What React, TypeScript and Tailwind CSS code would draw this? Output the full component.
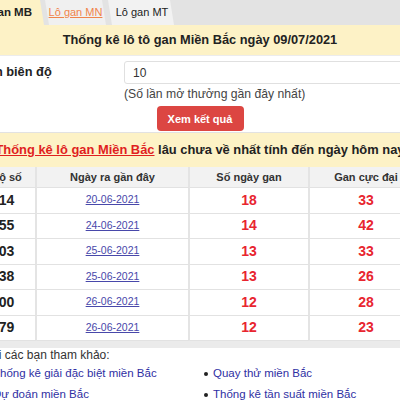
import React from "react";

const rows = [
  { so: "14", date: "20-06-2021", gan: "18", max: "33" },
  { so: "55", date: "24-06-2021", gan: "14", max: "42" },
  { so: "03", date: "25-06-2021", gan: "13", max: "33" },
  { so: "38", date: "25-06-2021", gan: "13", max: "26" },
  { so: "00", date: "26-06-2021", gan: "12", max: "28" },
  { so: "79", date: "26-06-2021", gan: "12", max: "23" },
];

export default function App() {
  return (
    <div className="w-[400px] h-[400px] overflow-hidden bg-white font-['Liberation_Sans',Arial,sans-serif] text-[#222]">
      <div className="w-[444px] -ml-[22px]">
        {/* Tabs */}
        <div className="flex h-[25px] bg-[#e3e3e3]">
          <div className="w-[66px] bg-[#fdf2c6] flex items-center justify-end pr-[12px] overflow-hidden whitespace-nowrap [clip-path:polygon(0_0,calc(100%_-_4px)_0,100%_100%,0_100%)]">
            <span className="text-[11.5px] font-bold text-[#222]">Lô gan MB</span>
          </div>
          <div className="w-[61px] ml-[1px] bg-[#f0f0f0] flex items-center justify-center whitespace-nowrap [clip-path:polygon(0_0,calc(100%_-_4px)_0,100%_100%,4px_100%)]">
            <span className="text-[11px] text-[#f0844c] underline">Lô gan MN</span>
          </div>
          <div className="w-[66px] ml-[2px] bg-[#f2f2f2] flex items-center justify-center whitespace-nowrap [clip-path:polygon(0_0,calc(100%_-_4px)_0,100%_100%,4px_100%)]">
            <span className="text-[11px] text-[#222] pl-[2px]">Lô gan MT</span>
          </div>
        </div>

        {/* Title panel */}
        <div className="h-[31px] bg-[#fdf2c6] flex items-center justify-center border-b border-[#ececec]">
          <h1 className="text-[12.8px] font-bold text-[#222] whitespace-nowrap">
            Thống kê lô tô gan Miền Bắc ngày 09/07/2021
          </h1>
        </div>

        {/* Form */}
        <div className="h-[77px] border-b border-[#e2e2e2] flex flex-col">
          <div className="flex pt-[5px]">
            <div className="w-[146px] shrink-0 pt-[1px]">
              <span className="block -ml-[8px] text-[12.8px] font-bold text-[#222] whitespace-nowrap">Chọn biên độ</span>
            </div>
            <div className="flex flex-col">
              <div className="w-[300px] h-[23px] border border-[#e0e0e0] rounded-[3px] flex items-center pl-[8px] text-[12px] text-[#333]">
                10
              </div>
              <div className="text-[12.2px] text-[#444] mt-[1px] whitespace-nowrap">(Số lần mở thưởng gần đây nhất)</div>
            </div>
          </div>
          <div className="flex justify-center mt-[3px]">
            <button className="w-[87px] h-[25px] rounded-[4px] bg-[#dc4642] text-white text-[11px] font-bold">
              Xem kết quả
            </button>
          </div>
        </div>

        {/* Strip */}
        <div className="h-[34px] bg-[#fdf2c6] flex items-center justify-center whitespace-nowrap">
          <span className="text-[12.9px] font-bold">
            <span className="text-[#e01f1f] underline">Thống kê lô gan Miền Bắc</span>
            <span className="text-[#222]"> lâu chưa về nhất tính đến ngày hôm nay</span>
          </span>
        </div>

        {/* Table */}
        <div className="grid grid-cols-[59px_153px_120px_112px]">
          {["Bộ số", "Ngày ra gần đây", "Số ngày gan", "Gan cực đại"].map((h, i) => (
            <div
              key={h}
              className={`h-[21px] bg-[#f2f2f2] flex items-center justify-center text-[11px] font-bold text-[#333] whitespace-nowrap border-b border-[#e2e2e2] ${i < 3 ? "border-r-2 border-r-[#e4e4e4]" : ""}`}
            >
              {h}
            </div>
          ))}
          {rows.map((r) => (
            <React.Fragment key={r.so}>
              <div className="h-[25.5px] flex items-center justify-center text-[14px] font-bold text-[#222] border-b border-[#e2e2e2] border-r-2 border-r-[#e4e4e4]">
                {r.so}
              </div>
              <div className="h-[25.5px] flex items-center justify-center border-b border-[#e2e2e2] border-r-2 border-r-[#e4e4e4]">
                <a className="text-[10.5px] text-[#4848aa] underline">{r.date}</a>
              </div>
              <div className="h-[25.5px] flex items-center justify-center text-[14px] font-bold text-[#e8252f] border-b border-[#e2e2e2] border-r-2 border-r-[#e4e4e4]">
                {r.gan}
              </div>
              <div className="h-[25.5px] flex items-center justify-center text-[14px] font-bold text-[#e8252f] border-b border-[#e2e2e2]">
                {r.max}
              </div>
            </React.Fragment>
          ))}
        </div>
        <div className="h-[7px] bg-[#ebebeb]" />

        {/* Footer */}
        <div>
          <div className="text-[12px] text-[#333] pl-[3px] h-[15px] leading-[15px] whitespace-nowrap">Mời các bạn tham khảo:</div>
          <div className="grid grid-cols-[220px_1fr] text-[11.5px] text-[#2f2fa3]">
            {[
              "Thống kê giải đặc biệt miền Bắc",
              "Quay thử miền Bắc",
              "Dự đoán miền Bắc",
              "Thống kê tần suất miền Bắc",
            ].map((t) => (
              <div key={t} className="h-[21px] flex items-center pl-[6px] whitespace-nowrap">
                <span className="w-[4px] h-[4px] rounded-full bg-[#222] mr-[5px] shrink-0" />
                <a>{t}</a>
              </div>
            ))}
          </div>
        </div>
      </div>
    </div>
  );
}
